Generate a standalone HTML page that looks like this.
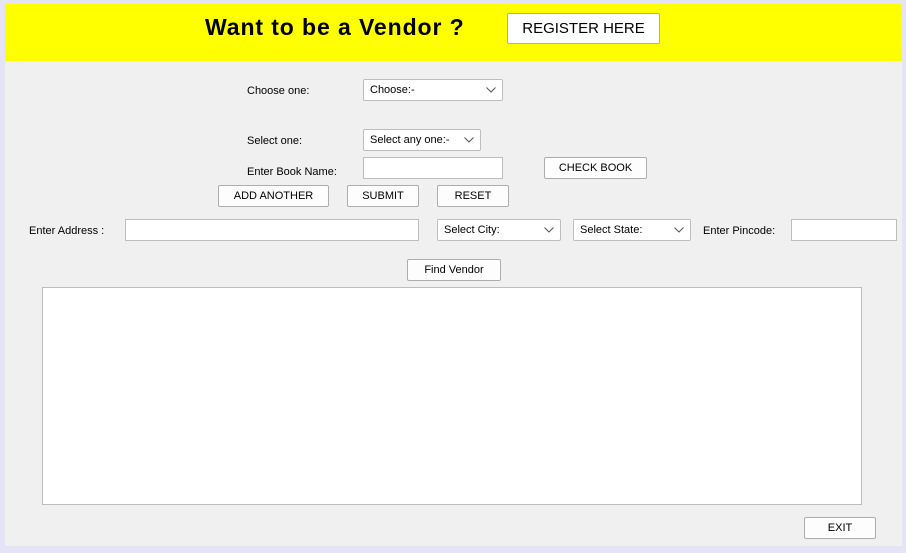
<!DOCTYPE html>
<html><head><style>
body{margin:0;width:906px;height:553px;background:#e4e4f6;position:relative;overflow:hidden;font-family:"Liberation Sans",sans-serif;color:#000}
#main{position:absolute;left:5px;top:4px;width:897px;height:542px;background:#f0f0f0}
#top{position:absolute;left:5px;top:4px;width:897px;height:57px;background:#ffff00}
.l{position:absolute;font-size:11px;white-space:nowrap}
.b{position:absolute;box-sizing:border-box;background:#fdfdfd;border:1px solid #adadad;border-radius:2px;font-size:11px;text-align:center;white-space:nowrap}
.i{position:absolute;box-sizing:border-box;background:#fff;border:1px solid #bdbdbd}
.s{position:absolute;box-sizing:border-box;background:#fff;border:1px solid #bdbdbd;border-radius:2px;font-size:11px;padding-left:6px;white-space:nowrap}
.s svg{position:absolute;right:6px;top:50%;margin-top:-3px}
</style></head><body>
<div id="main"></div>
<div id="top"></div>
<div class="l" style="left:205px;top:14px;font-size:23px;font-weight:bold;letter-spacing:0.9px">Want to be a Vendor ?</div>
<div class="b" style="left:507px;top:13px;width:153px;height:31px;line-height:30px;font-size:15px;background:#fff">REGISTER HERE</div>

<div class="l" style="left:247px;top:85px">Choose one:</div>
<div class="s" style="left:363px;top:79px;width:140px;height:22px;line-height:21px">Choose:-<svg width="10" height="6"><path d="M0.5 0.5L5 5L9.5 0.5" fill="none" stroke="#555"/></svg></div>

<div class="l" style="left:247px;top:135px">Select one:</div>
<div class="s" style="left:363px;top:129px;width:118px;height:22px;line-height:21px">Select any one:-<svg width="10" height="6"><path d="M0.5 0.5L5 5L9.5 0.5" fill="none" stroke="#555"/></svg></div>

<div class="l" style="left:247px;top:166px">Enter Book Name:</div>
<div class="i" style="left:363px;top:157px;width:140px;height:22px"></div>
<div class="b" style="left:544px;top:157px;width:103px;height:22px;line-height:21px">CHECK BOOK</div>

<div class="b" style="left:218px;top:185px;width:111px;height:22px;line-height:21px">ADD ANOTHER</div>
<div class="b" style="left:347px;top:185px;width:72px;height:22px;line-height:21px">SUBMIT</div>
<div class="b" style="left:437px;top:185px;width:72px;height:22px;line-height:21px">RESET</div>

<div class="l" style="left:29px;top:225px">Enter Address :</div>
<div class="i" style="left:125px;top:219px;width:294px;height:22px"></div>
<div class="s" style="left:437px;top:219px;width:124px;height:22px;line-height:21px">Select City:<svg width="10" height="6"><path d="M0.5 0.5L5 5L9.5 0.5" fill="none" stroke="#555"/></svg></div>
<div class="s" style="left:573px;top:219px;width:118px;height:22px;line-height:21px">Select State:<svg width="10" height="6"><path d="M0.5 0.5L5 5L9.5 0.5" fill="none" stroke="#555"/></svg></div>
<div class="l" style="left:703px;top:225px">Enter Pincode:</div>
<div class="i" style="left:791px;top:219px;width:106px;height:22px"></div>

<div class="b" style="left:407px;top:259px;width:94px;height:22px;line-height:21px">Find Vendor</div>
<div class="i" style="left:42px;top:287px;width:820px;height:218px"></div>
<div class="b" style="left:804px;top:517px;width:72px;height:22px;line-height:21px">EXIT</div>
</body></html>
